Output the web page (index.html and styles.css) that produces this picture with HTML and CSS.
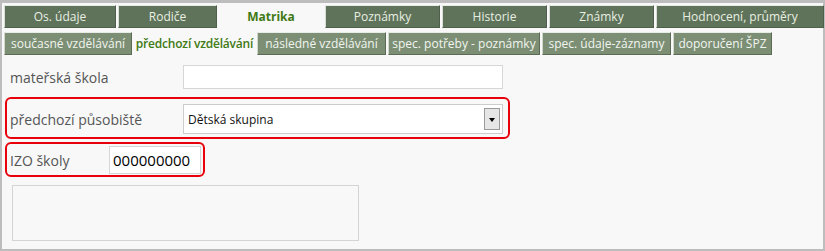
FILE: index.html
```html
<!DOCTYPE html>
<html lang="cs">
<head>
    <meta charset="UTF-8">
    <title>Matrika</title>
    <link rel="stylesheet" href="styles.css">
</head>
<body>
<div class="frame">
    <div class="tabs main-tabs">
        <div class="tab">Os. údaje</div>
        <div class="tab">Rodiče</div>
        <div class="tab active">Matrika</div>
        <div class="tab">Poznámky</div>
        <div class="tab">Historie</div>
        <div class="tab">Známky</div>
        <div class="tab">Hodnocení, průměry</div>
    </div>
    <div class="tabs sub-tabs">
        <div class="tab">současné vzdělávání</div>
        <div class="tab active">předchozí vzdělávání</div>
        <div class="tab">následné vzdělávání</div>
        <div class="tab">spec. potřeby - poznámky</div>
        <div class="tab">spec. údaje-záznamy</div>
        <div class="tab">doporučení ŠPZ</div>
    </div>

    <div class="form">
        <div class="row row-ms">
            <label class="label">mateřská škola</label>
            <div class="field text-field"></div>
        </div>
        <div class="row row-mark row-prev">
            <label class="label">předchozí působiště</label>
            <div class="field select-field">
                <span>Dětská skupina</span>
                <span class="arrow"></span>
            </div>
        </div>
        <div class="row row-mark row-izo">
            <label class="label label-izo">IZO školy</label>
            <div class="field izo-field">000000000</div>
        </div>
        <div class="note-box"></div>
    </div>
</div>
</body>
</html>
```

FILE: styles.css
```css
body {
    margin: 0;
    font-family: "Open Sans", "Noto Sans", sans-serif;
}

.frame {
    width: 825px;
    height: 251px;
    box-sizing: border-box;
    border: 2px solid #bdbdbd;
    border-top-width: 3px;
    background: #f8f8f8;
    padding: 2px 1px 0 2px;
}

.tabs {
    display: flex;
    gap: 2px;
}

.tab {
    flex-shrink: 0;
    box-sizing: border-box;
    height: 23px;
    line-height: 21px;
    font-size: 12px;
    text-align: center;
    white-space: nowrap;
    border: 1px solid #4f5f4b;
    border-top-color: #e8ece6;
    border-left-color: #d8ded5;
}

.main-tabs .tab {
    background: #5f735a;
    color: #e8efe2;
}

.main-tabs .tab:nth-child(1) { width: 112px; }
.main-tabs .tab:nth-child(2) { width: 99px; }
.main-tabs .tab:nth-child(3) { width: 104px; }
.main-tabs .tab:nth-child(4) { width: 115px; }
.main-tabs .tab:nth-child(5) { width: 105px; }
.main-tabs .tab:nth-child(6) { width: 105px; }
.main-tabs .tab:nth-child(7) { width: 168px; }

.sub-tabs {
    margin-top: 4px;
}

.sub-tabs .tab {
    background: #7c8f75;
    color: #f2f5ef;
    border-color: #5b6b56;
    border-top-color: #e8ece6;
    border-left-color: #d0d8cc;
}

.sub-tabs .tab:nth-child(1) { width: 128px; }
.sub-tabs .tab:nth-child(2) { width: 121px; }
.sub-tabs .tab:nth-child(3) { width: 129px; }
.sub-tabs .tab:nth-child(4) { width: 152px; }
.sub-tabs .tab:nth-child(5) { width: 129px; }
.sub-tabs .tab:nth-child(6) { width: 99px; }

.tabs .tab.active {
    background: #f8f8f8;
    border-color: #f8f8f8;
    color: #3f7a14;
    font-weight: 600;
    letter-spacing: -0.2px;
}

.main-tabs .tab.active {
    height: 25px;
    margin-top: -2px;
    padding-top: 2px;
    font-weight: 700;
    letter-spacing: 0;
}

.form {
    padding: 5px 0 0 1px;
}

.row {
    display: flex;
    align-items: center;
    width: max-content;
    border: 2px solid transparent;
    border-radius: 6px;
    margin-bottom: 3px;
}

.row-ms {
    padding: 3px 5px 3px 3px;
}

.row-mark {
    border-color: #e8000b;
}

.row-prev {
    padding: 5px 5px 3px 3px;
}

.row-izo {
    padding: 2px 2px 1px 3px;
}

.label {
    width: 173px;
    box-sizing: border-box;
    font-size: 14px;
    color: #555;
}

.label-izo {
    width: 99px;
}

.field {
    box-sizing: border-box;
    background: #fff;
    border: 1px solid #d6d6d6;
}

.text-field {
    width: 320px;
    height: 24px;
}

.select-field {
    width: 320px;
    height: 30px;
    display: flex;
    align-items: center;
    justify-content: space-between;
    padding: 0 2px 0 4px;
    font-size: 12px;
    color: #111;
    border-color: #ccc;
}

.arrow {
    width: 16px;
    height: 22px;
    box-sizing: border-box;
    border: 1px solid #9a9a9a;
    background: #e6e6e6;
    position: relative;
}

.arrow::after {
    content: "";
    position: absolute;
    left: 4px;
    top: 9px;
    border-left: 3.5px solid transparent;
    border-right: 3.5px solid transparent;
    border-top: 4px solid #000;
}

.izo-field {
    width: 92px;
    height: 28px;
    line-height: 26px;
    padding-left: 3px;
    font-size: 15px;
    color: #000;
}

.note-box {
    width: 347px;
    height: 56px;
    box-sizing: border-box;
    margin: 8px 0 0 7px;
    border: 1px solid #d4d4d4;
}
```
